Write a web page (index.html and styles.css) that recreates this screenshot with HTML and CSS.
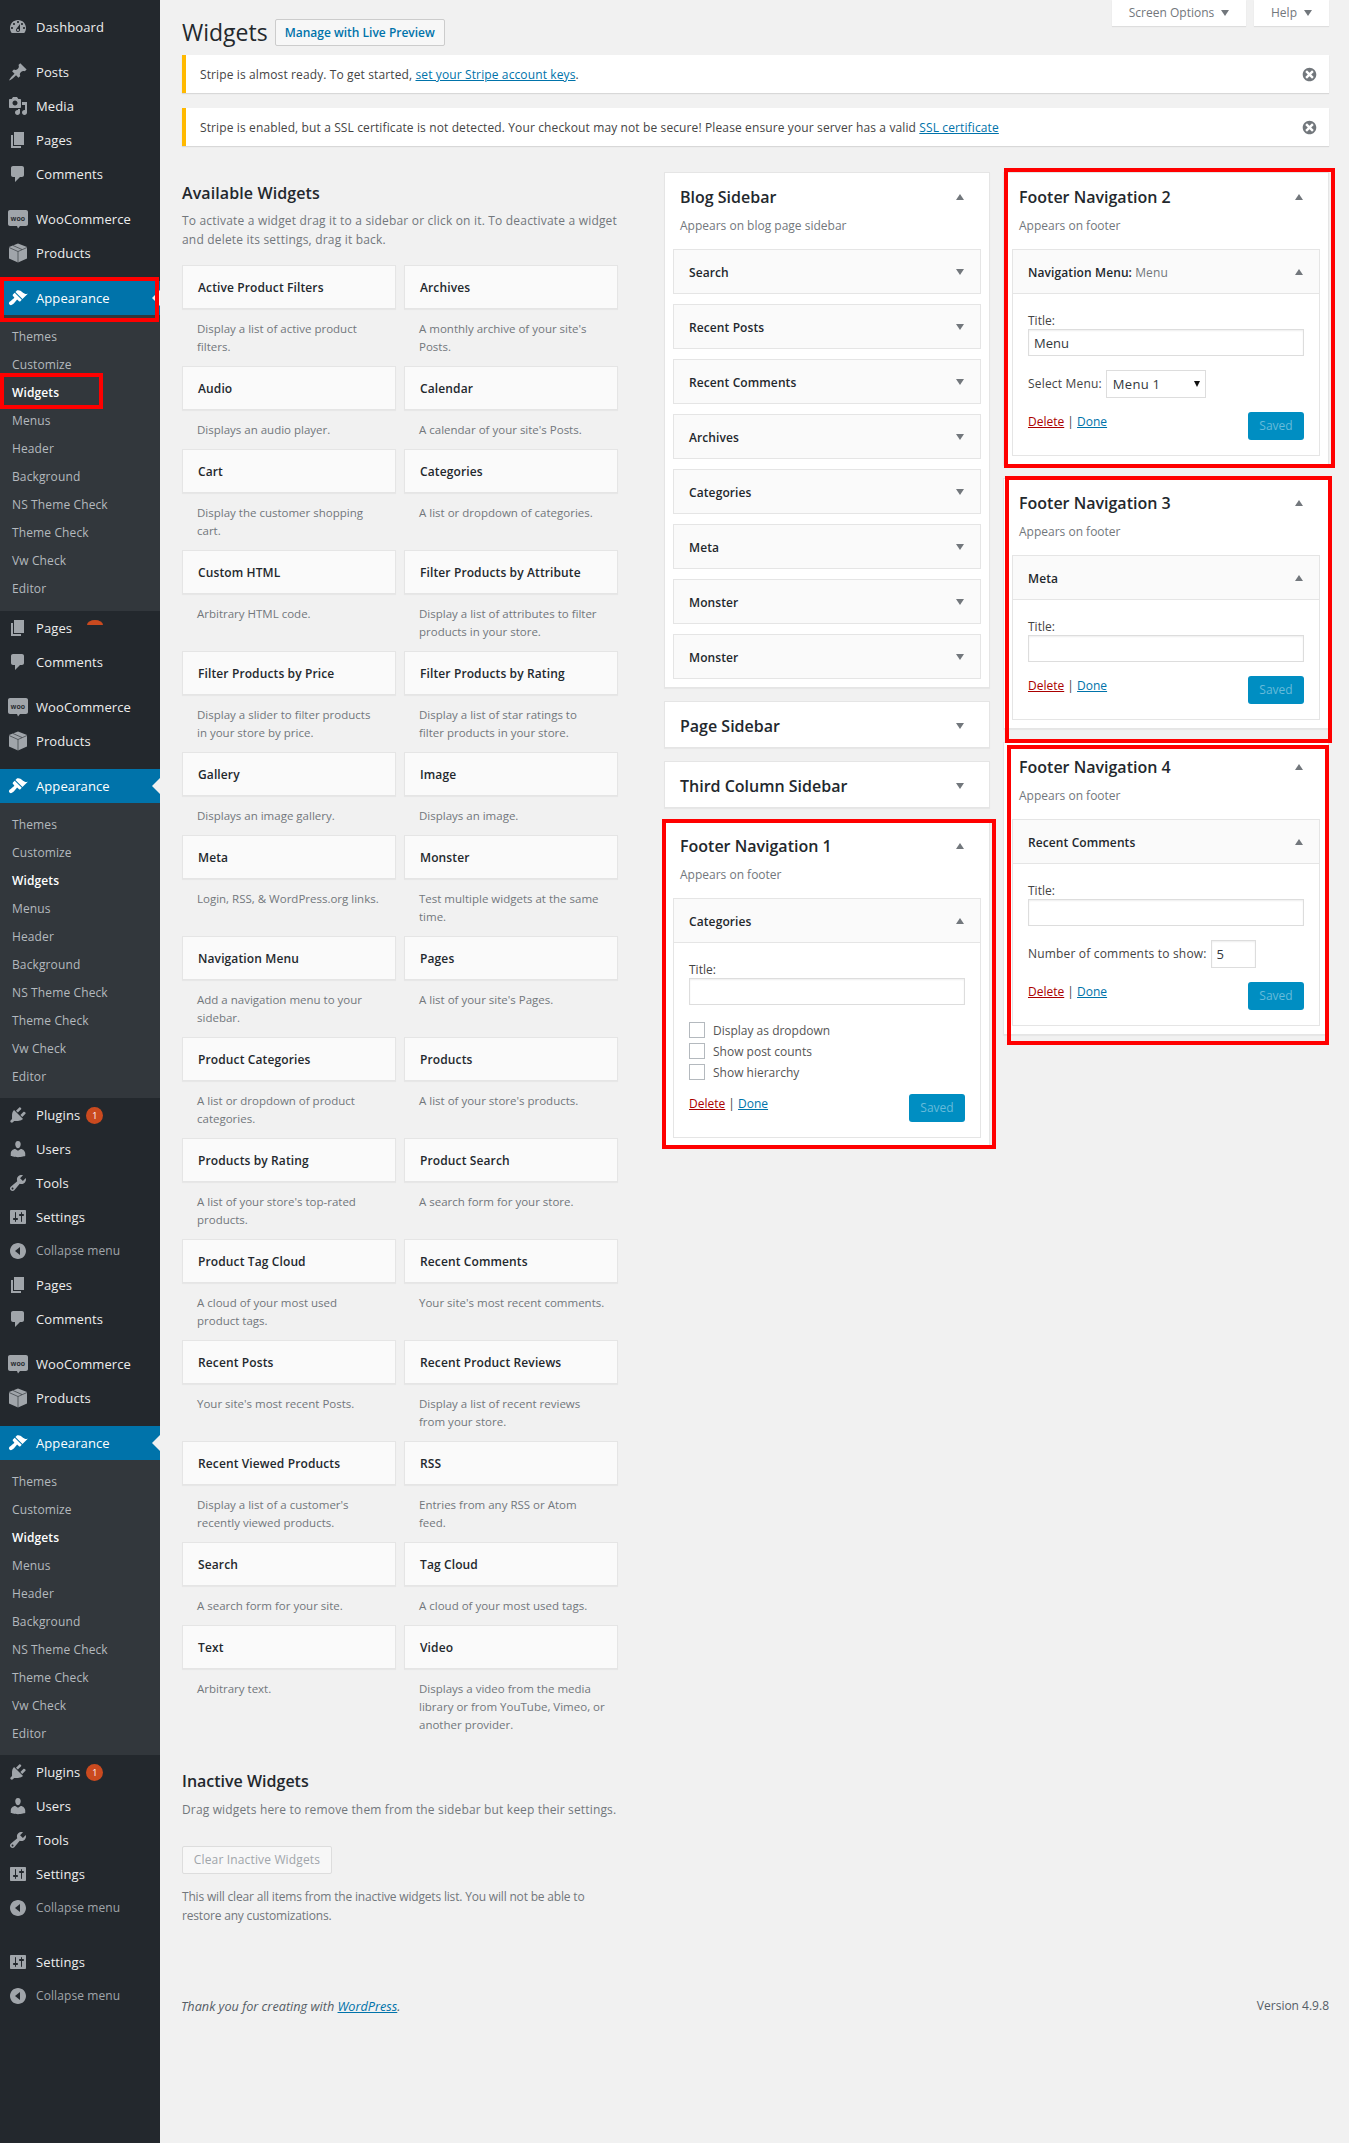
FILE: index.html
```html
<!DOCTYPE html>
<html>
<head>
<meta charset="utf-8" />
<title>Widgets</title>
<link rel="stylesheet" href="styles.css">
</head>
<body>
<svg class="sprite" xmlns="http://www.w3.org/2000/svg">
	<symbol id="i-dashboard" viewBox="0 0 20 20"><path d="M3.76 16h12.48c1.1-1.37 1.76-3.11 1.76-5 0-4.42-3.58-8-8-8s-8 3.58-8 8c0 1.89.66 3.63 1.76 5zM10 4c.55 0 1 .45 1 1s-.45 1-1 1-1-.45-1-1 .45-1 1-1zM6 6c.55 0 1 .45 1 1s-.45 1-1 1-1-.45-1-1 .45-1 1-1zm8 0c.55 0 1 .45 1 1s-.45 1-1 1-1-.45-1-1 .45-1 1-1zm-5.37 5.55L12 7v6c0 1.1-.9 2-2 2s-2-.9-2-2c0-.57.24-1.08.63-1.45zM4 10c.55 0 1 .45 1 1s-.45 1-1 1-1-.45-1-1 .45-1 1-1zm12 0c.55 0 1 .45 1 1s-.45 1-1 1-1-.45-1-1 .45-1 1-1zm-5 3c0-.55-.45-1-1-1s-1 .45-1 1 .45 1 1 1 1-.45 1-1z"/></symbol>
	<symbol id="i-post" viewBox="0 0 20 20"><path d="M10.44 3.02l1.82-1.82 6.36 6.35-1.83 1.82c-1.05-.68-2.48-.57-3.41.36l-.75.75c-.92.93-1.04 2.35-.35 3.41l-1.83 1.82-2.41-2.41-2.8 2.79c-.42.42-3.38 2.71-3.8 2.29s1.86-3.39 2.28-3.81l2.79-2.79L4.1 9.36l1.83-1.82c1.05.69 2.48.57 3.4-.36l.75-.75c.93-.92 1.05-2.35.36-3.41z"/></symbol>
	<symbol id="i-media" viewBox="0 0 20 20"><path d="M13 11V4c0-.55-.45-1-1-1h-1.67L9 1H5L3.67 3H2c-.55 0-1 .45-1 1v7c0 .55.45 1 1 1h10c.55 0 1-.45 1-1zM7 4.5c1.38 0 2.5 1.12 2.5 2.5S8.38 9.5 7 9.5 4.5 8.38 4.5 7 5.62 4.5 7 4.5zM14 6h5v10.5c0 1.38-1.12 2.5-2.5 2.5S14 17.88 14 16.5s1.12-2.5 2.5-2.5c.17 0 .34.02.5.05V9h-3V6zm-4 8.05V13h2v3.5c0 1.38-1.12 2.5-2.5 2.5S7 17.88 7 16.5 8.12 14 9.5 14c.17 0 .34.02.5.05z"/></symbol>
	<symbol id="i-page" viewBox="0 0 20 20"><path d="M6 15V2h10v13H6zm-1 1h8v2H3V5h2v11z"/></symbol>
	<symbol id="i-comment" viewBox="0 0 20 20"><path d="M5 2h9c1.1 0 2 .9 2 2v7c0 1.1-.9 2-2 2h-2l-5 5v-5H5c-1.1 0-2-.9-2-2V4c0-1.1.9-2 2-2z"/></symbol>
	<symbol id="i-woo" viewBox="0 0 20 20"><path d="M2 1h16c1.1 0 2 .9 2 2v12c0 1.1-.9 2-2 2h-6l-2 2.500-1-2.500H2c-1.100 0-2-.9-2-2V3c0-1.100.9-2 2-2z"/><text x="10" y="11.500" text-anchor="middle" class="woo-text">woo</text></symbol>
	<symbol id="i-box" viewBox="0 0 20 20"><path d="M10 0.500l9 3.500v11.500l-9 4-9-4V4z"/><path class="box-line" d="M1 4.500l9 4 9-4M10 8.500v11M5 2.500l9 4"/></symbol>
	<symbol id="i-brush" viewBox="0 0 20 20"><path d="M14.480 11.060L7.410 3.990l1.500-1.500c.5-.56 2.300-.47 3.510.32 1.210.8 1.430 1.280 2.910 2.100 1.180.64 2.450 1.260 4.450.85zm-.71.71L6.700 4.700 4.930 6.470c-.39.39-.39 1.020 0 1.410l1.060 1.060c.39.39.39 1.030 0 1.420-.6.6-1.430 1.110-2.210 1.690-.35.26-.7.53-1.010.84C1.430 13.230.57 15.110 1.100 16.100l.93.91c.99.53 2.670-.32 3.970-1.660.31-.31.58-.66.84-1.010.58-.78 1.090-1.610 1.690-2.210.39-.39 1.020-.39 1.410 0l1.060 1.060c.39.39 1.020.39 1.410 0z"/></symbol>
	<symbol id="i-plugin" viewBox="0 0 20 20"><path d="M13.110 4.360L9.870 7.600 8 5.730l3.240-3.240c.35-.34 1.050-.2 1.560.32.52.51.66 1.210.31 1.550zm-8 1.770l.91-1.120 9.010 9.010-1.190.84c-.71.71-2.630 1.160-3.820 1.160H6.140L4.900 17.260c-.59.59-1.540.59-2.120 0-.59-.58-.59-1.530 0-2.120l1.240-1.240v-3.880c0-1.130.4-3.190 1.090-3.890zm7.260 3.970l3.240-3.240c.34-.35 1.040-.21 1.550.31.52.51.66 1.210.31 1.550l-3.240 3.250z"/></symbol>
	<symbol id="i-users" viewBox="0 0 20 20"><path d="M10 9.250c-2.270 0-2.730-3.440-2.730-3.440C7 4.020 7.820 2 9.970 2c2.160 0 2.980 2.020 2.710 3.810 0 0-.41 3.440-2.680 3.440zm0 2.570L12.720 10c2.390 0 4.520 2.330 4.520 4.530v2.490s-3.650 1.130-7.240 1.130c-3.650 0-7.240-1.130-7.240-1.130v-2.490c0-2.250 1.940-4.480 4.470-4.480z"/></symbol>
	<symbol id="i-tools" viewBox="0 0 20 20"><path d="M16.680 9.770c-1.340 1.340-3.300 1.670-4.950.99l-5.410 6.520c-.99.99-2.590.99-3.580 0s-.99-2.590 0-3.570l6.520-5.420c-.68-1.650-.35-3.610.99-4.950 1.280-1.280 3.120-1.620 4.720-1.060l-2.890 2.890 2.820 2.820 2.860-2.870c.53 1.580.18 3.390-1.080 4.650zM3.810 16.210c.4.39 1.040.39 1.430 0 .4-.4.4-1.040 0-1.430-.39-.4-1.030-.4-1.430 0-.39.39-.39 1.030 0 1.430z"/></symbol>
	<symbol id="i-settings" viewBox="0 0 20 20"><path d="M18 16V4c0-.55-.45-1-1-1H3c-.55 0-1 .45-1 1v12c0 .55.45 1 1 1h14c.55 0 1-.45 1-1zM8 11h1c.55 0 1 .45 1 1s-.45 1-1 1H8v1.500c0 .28-.22.5-.5.5s-.5-.22-.5-.5V13H6c-.55 0-1-.45-1-1s.45-1 1-1h1V5.500c0-.28.22-.5.5-.5s.5.22.5.5V11zm5-2h-1c-.55 0-1-.45-1-1s.45-1 1-1h1V5.500c0-.28.22-.5.5-.5s.5.22.5.5V7h1c.55 0 1 .45 1 1s-.45 1-1 1h-1v5.500c0 .28-.22.5-.5.5s-.5-.22-.5-.5V9z"/></symbol>
	<symbol id="i-collapse" viewBox="0 0 20 20"><path d="M10 2c4.420 0 8 3.580 8 8s-3.580 8-8 8-8-3.580-8-8 3.580-8 8-8zm2 12V6l-5 4z"/></symbol>
	<symbol id="i-dismiss" viewBox="0 0 20 20"><path d="M10 2c4.420 0 8 3.580 8 8s-3.580 8-8 8-8-3.580-8-8 3.580-8 8-8zm5 11l-3-3 3-3-2-2-3 3-3-3-2 2 3 3-3 3 2 2 3-3 3 3z"/></symbol>
</svg>

<div id="shell">
<ul id="adminmenu">
	<li class="item first"><svg class="ico"><use href="#i-dashboard"/></svg>Dashboard</li>
	<li class="sep"></li>
	<li class="item"><svg class="ico"><use href="#i-post"/></svg>Posts</li>
	<li class="item"><svg class="ico"><use href="#i-media"/></svg>Media</li>
	<li class="item"><svg class="ico"><use href="#i-page"/></svg>Pages</li>
	<li class="item"><svg class="ico"><use href="#i-comment"/></svg>Comments</li>
	<li class="sep"></li>
	<li class="item"><svg class="ico"><use href="#i-woo"/></svg>WooCommerce</li>
	<li class="item"><svg class="ico"><use href="#i-box"/></svg>Products</li>
	<li class="sep"></li>
	<li class="item current"><svg class="ico"><use href="#i-brush"/></svg>Appearance</li>
	<li>
		<ul class="submenu firstsub">
			<li>Themes</li><li>Customize</li><li class="on">Widgets</li><li>Menus</li><li>Header</li><li>Background</li><li>NS Theme Check</li><li>Theme Check</li><li>Vw Check</li><li>Editor</li>
		</ul>
	</li>
	<li class="item"><svg class="ico"><use href="#i-page"/></svg>Pages<span class="sliver"></span></li>
	<li class="item"><svg class="ico"><use href="#i-comment"/></svg>Comments</li>
	<li class="sep"></li>
	<li class="item"><svg class="ico"><use href="#i-woo"/></svg>WooCommerce</li>
	<li class="item"><svg class="ico"><use href="#i-box"/></svg>Products</li>
	<li class="sep"></li>
	<li class="item current"><svg class="ico"><use href="#i-brush"/></svg>Appearance</li>
	<li>
		<ul class="submenu">
			<li>Themes</li><li>Customize</li><li class="on">Widgets</li><li>Menus</li><li>Header</li><li>Background</li><li>NS Theme Check</li><li>Theme Check</li><li>Vw Check</li><li>Editor</li>
		</ul>
	</li>
	<li class="item"><svg class="ico"><use href="#i-plugin"/></svg>Plugins<span class="badge">1</span></li>
	<li class="item"><svg class="ico"><use href="#i-users"/></svg>Users</li>
	<li class="item"><svg class="ico"><use href="#i-tools"/></svg>Tools</li>
	<li class="item"><svg class="ico"><use href="#i-settings"/></svg>Settings</li>
	<li class="item collapse"><svg class="ico"><use href="#i-collapse"/></svg>Collapse menu</li>
	<li class="item"><svg class="ico"><use href="#i-page"/></svg>Pages</li>
	<li class="item"><svg class="ico"><use href="#i-comment"/></svg>Comments</li>
	<li class="sep"></li>
	<li class="item"><svg class="ico"><use href="#i-woo"/></svg>WooCommerce</li>
	<li class="item"><svg class="ico"><use href="#i-box"/></svg>Products</li>
	<li class="sep"></li>
	<li class="item current"><svg class="ico"><use href="#i-brush"/></svg>Appearance</li>
	<li>
		<ul class="submenu">
			<li>Themes</li><li>Customize</li><li class="on">Widgets</li><li>Menus</li><li>Header</li><li>Background</li><li>NS Theme Check</li><li>Theme Check</li><li>Vw Check</li><li>Editor</li>
		</ul>
	</li>
	<li class="item"><svg class="ico"><use href="#i-plugin"/></svg>Plugins<span class="badge">1</span></li>
	<li class="item"><svg class="ico"><use href="#i-users"/></svg>Users</li>
	<li class="item"><svg class="ico"><use href="#i-tools"/></svg>Tools</li>
	<li class="item"><svg class="ico"><use href="#i-settings"/></svg>Settings</li>
	<li class="item collapse"><svg class="ico"><use href="#i-collapse"/></svg>Collapse menu</li>
	<li class="sep wide"></li>
	<li class="item"><svg class="ico"><use href="#i-settings"/></svg>Settings</li>
	<li class="item collapse"><svg class="ico"><use href="#i-collapse"/></svg>Collapse menu</li>
</ul>

<div id="content">
	<div class="titlerow">
		<h1>Widgets</h1>
		<a class="btn-live" href="javascript:;">Manage with Live Preview</a>
		<div class="tabs"><span class="tab tab-screen">Screen Options<i class="caret down"></i></span><span class="tab tab-help">Help<i class="caret down"></i></span></div>
	</div>
	<div class="notice">
		<p>Stripe is almost ready. To get started, <a href="javascript:;">set your Stripe account keys</a>.</p>
		<svg class="dismiss"><use href="#i-dismiss"/></svg>
	</div>
	<div class="notice">
		<p>Stripe is enabled, but a SSL certificate is not detected. Your checkout may not be secure! Please ensure your server has a valid <a href="javascript:;">SSL certificate</a></p>
		<svg class="dismiss"><use href="#i-dismiss"/></svg>
	</div>

	<div class="columns">
		<div class="available">
			<h2>Available Widgets</h2>
			<p class="lead">To activate a widget drag it to a sidebar or click on it. To deactivate a widget and delete its settings, drag it back.</p>
			<div class="widgetgrid">
				<div class="wg"><h3>Active Product Filters</h3><p>Display a list of active product filters.</p></div>
				<div class="wg"><h3>Archives</h3><p>A monthly archive of your site's Posts.</p></div>
				<div class="wg"><h3>Audio</h3><p>Displays an audio player.</p></div>
				<div class="wg"><h3>Calendar</h3><p>A calendar of your site's Posts.</p></div>
				<div class="wg"><h3>Cart</h3><p>Display the customer shopping cart.</p></div>
				<div class="wg"><h3>Categories</h3><p>A list or dropdown of categories.</p></div>
				<div class="wg"><h3>Custom HTML</h3><p>Arbitrary HTML code.</p></div>
				<div class="wg"><h3>Filter Products by Attribute</h3><p>Display a list of attributes to filter products in your store.</p></div>
				<div class="wg"><h3>Filter Products by Price</h3><p>Display a slider to filter products<br>in your store by price.</p></div>
				<div class="wg"><h3>Filter Products by Rating</h3><p>Display a list of star ratings to<br>filter products in your store.</p></div>
				<div class="wg"><h3>Gallery</h3><p>Displays an image gallery.</p></div>
				<div class="wg"><h3>Image</h3><p>Displays an image.</p></div>
				<div class="wg"><h3>Meta</h3><p>Login, RSS, &amp; WordPress.org links.</p></div>
				<div class="wg"><h3>Monster</h3><p>Test multiple widgets at the same time.</p></div>
				<div class="wg"><h3>Navigation Menu</h3><p>Add a navigation menu to your sidebar.</p></div>
				<div class="wg"><h3>Pages</h3><p>A list of your site's Pages.</p></div>
				<div class="wg"><h3>Product Categories</h3><p>A list or dropdown of product categories.</p></div>
				<div class="wg"><h3>Products</h3><p>A list of your store's products.</p></div>
				<div class="wg"><h3>Products by Rating</h3><p>A list of your store's top-rated products.</p></div>
				<div class="wg"><h3>Product Search</h3><p>A search form for your store.</p></div>
				<div class="wg"><h3>Product Tag Cloud</h3><p>A cloud of your most used<br>product tags.</p></div>
				<div class="wg"><h3>Recent Comments</h3><p>Your site's most recent comments.</p></div>
				<div class="wg"><h3>Recent Posts</h3><p>Your site's most recent Posts.</p></div>
				<div class="wg"><h3>Recent Product Reviews</h3><p>Display a list of recent reviews from your store.</p></div>
				<div class="wg"><h3>Recent Viewed Products</h3><p>Display a list of a customer's recently viewed products.</p></div>
				<div class="wg"><h3>RSS</h3><p>Entries from any RSS or Atom feed.</p></div>
				<div class="wg"><h3>Search</h3><p>A search form for your site.</p></div>
				<div class="wg"><h3>Tag Cloud</h3><p>A cloud of your most used tags.</p></div>
				<div class="wg"><h3>Text</h3><p>Arbitrary text.</p></div>
				<div class="wg"><h3>Video</h3><p>Displays a video from the media library or from YouTube, Vimeo, or another provider.</p></div>
			</div>
			<h2 class="inactive">Inactive Widgets</h2>
			<p class="lead droplead">Drag widgets here to remove them from the sidebar but keep their settings.</p>
			<span class="btn-clear">Clear Inactive Widgets</span>
			<p class="lead clearnote">This will clear all items from the inactive widgets list. You will not be able to restore any customizations.</p>
		</div>

		<div class="sidebars">
			<div class="panel">
				<div class="panelhead"><h2>Blog Sidebar</h2><i class="caret up"></i></div>
				<p class="paneldesc">Appears on blog page sidebar</p>
				<div class="inner"><div class="innerhead"><h3>Search</h3><i class="caret down"></i></div></div>
				<div class="inner"><div class="innerhead"><h3>Recent Posts</h3><i class="caret down"></i></div></div>
				<div class="inner"><div class="innerhead"><h3>Recent Comments</h3><i class="caret down"></i></div></div>
				<div class="inner"><div class="innerhead"><h3>Archives</h3><i class="caret down"></i></div></div>
				<div class="inner"><div class="innerhead"><h3>Categories</h3><i class="caret down"></i></div></div>
				<div class="inner"><div class="innerhead"><h3>Meta</h3><i class="caret down"></i></div></div>
				<div class="inner"><div class="innerhead"><h3>Monster</h3><i class="caret down"></i></div></div>
				<div class="inner"><div class="innerhead"><h3>Monster</h3><i class="caret down"></i></div></div>
			</div>
			<div class="panel closed"><div class="panelhead"><h2>Page Sidebar</h2><i class="caret down"></i></div></div>
			<div class="panel closed"><div class="panelhead"><h2>Third Column Sidebar</h2><i class="caret down"></i></div></div>
			<div class="panel">
				<div class="panelhead"><h2>Footer Navigation 1</h2><i class="caret up"></i></div>
				<p class="paneldesc">Appears on footer</p>
				<div class="inner">
					<div class="innerhead"><h3>Categories</h3><i class="caret up"></i></div>
					<div class="innerbody">
						<label class="field">Title:<input type="text"></label>
						<div class="checks">
							<label><input type="checkbox">Display as dropdown</label>
							<label><input type="checkbox">Show post counts</label>
							<label><input type="checkbox">Show hierarchy</label>
						</div>
						<div class="actions"><span class="links"><a class="del" href="javascript:;">Delete</a> | <a href="javascript:;">Done</a></span><span class="btn-saved">Saved</span></div>
					</div>
				</div>
			</div>
		</div>

		<div class="sidebars">
			<div class="panel">
				<div class="panelhead"><h2>Footer Navigation 2</h2><i class="caret up"></i></div>
				<p class="paneldesc">Appears on footer</p>
				<div class="inner">
					<div class="innerhead"><h3>Navigation Menu:<span class="in"> Menu</span></h3><i class="caret up"></i></div>
					<div class="innerbody">
						<label class="field">Title:<input type="text" value="Menu"></label>
						<label class="inline">Select Menu: <span class="selwrap"><select class="menusel"><option>Menu 1</option></select></span></label>
						<div class="actions"><span class="links"><a class="del" href="javascript:;">Delete</a> | <a href="javascript:;">Done</a></span><span class="btn-saved">Saved</span></div>
					</div>
				</div>
			</div>
			<div class="panel">
				<div class="panelhead"><h2>Footer Navigation 3</h2><i class="caret up"></i></div>
				<p class="paneldesc">Appears on footer</p>
				<div class="inner">
					<div class="innerhead"><h3>Meta</h3><i class="caret up"></i></div>
					<div class="innerbody">
						<label class="field">Title:<input type="text"></label>
						<div class="actions"><span class="links"><a class="del" href="javascript:;">Delete</a> | <a href="javascript:;">Done</a></span><span class="btn-saved">Saved</span></div>
					</div>
				</div>
			</div>
			<div class="panel">
				<div class="panelhead"><h2>Footer Navigation 4</h2><i class="caret up"></i></div>
				<p class="paneldesc">Appears on footer</p>
				<div class="inner">
					<div class="innerhead"><h3>Recent Comments</h3><i class="caret up"></i></div>
					<div class="innerbody">
						<label class="field">Title:<input type="text"></label>
						<label class="inline">Number of comments to show: <input class="num" type="text" value="5"></label>
						<div class="actions"><span class="links"><a class="del" href="javascript:;">Delete</a> | <a href="javascript:;">Done</a></span><span class="btn-saved">Saved</span></div>
					</div>
				</div>
			</div>
		</div>
	</div>

	<div class="foot">
		<em>Thank you for creating with <a href="javascript:;">WordPress</a>.</em>
		<span>Version 4.9.8</span>
	</div>
</div>
</div>

<div class="mark mark-appearance"></div>
<div class="mark mark-widgets"></div>
<div class="mark mark-f1"></div>
<div class="mark mark-f2"></div>
<div class="mark mark-f3"></div>
<div class="mark mark-f4"></div>
</body>
</html>
```

FILE: styles.css
```css
*{margin:0;padding:0;box-sizing:border-box;}
html,body{background:#f1f1f1;}
body{position:relative;font-family:"Open Sans","Liberation Sans",sans-serif;font-size:12px;line-height:18px;color:#444;}
ul{list-style:none;}
a{color:#0073aa;}
.sprite{display:none;}

#shell{display:flex;min-height:100vh;}

/* admin menu */
#adminmenu{width:160px;flex:none;background:#23282d;color:#eee;font-size:13px;letter-spacing:.1px;padding-top:10px;}
.item{position:relative;display:flex;align-items:center;height:34px;}
.ico{width:20px;height:20px;margin:0 8px;fill:#a0a5aa;flex:none;}
.woo-text{font:bold 7px "Liberation Sans",sans-serif;fill:#23282d;}
.box-line{fill:none;stroke:#23282d;stroke-width:.6;}
.sep{height:11px;}
.sep.wide{height:20px;}
.current{background:#0073aa;color:#fff;}
.current .ico{fill:#fff;}
.current:after{content:'';position:absolute;right:0;top:9px;border:8px solid transparent;border-left:0;border-right-color:#f1f1f1;}
.collapse{color:#a0a5aa;font-size:12px;}
.submenu{background:#32373c;padding:8px 0 7px;color:#b4b9be;font-size:12px;letter-spacing:.12px;}
.submenu.firstsub{padding-bottom:8px;}
.submenu li{height:28px;line-height:28px;padding-left:12px;}
.submenu .on{color:#fff;font-weight:600;}
.badge{width:17px;height:17px;border-radius:50%;background:#ca4a1f;color:#fff;font-size:9px;line-height:17px;text-align:center;margin-left:6px;}
.sliver{position:absolute;left:87px;top:9px;width:16px;height:5px;background:#ca4a1f;border-radius:50% 50% 0 0 / 100% 100% 0 0;}

/* main */
#content{flex:1;padding:0 20px 0 22px;min-width:0;}
.titlerow{display:flex;height:46px;}
h1{align-self:flex-end;font-size:23px;font-weight:400;line-height:27px;color:#23282d;margin-right:7px;}
.btn-live{align-self:flex-end;height:27px;line-height:25px;padding:0 9px;border:1px solid #ccc;border-radius:2px;background:#f7f7f7;color:#0073aa;font-weight:600;text-decoration:none;}
.tabs{margin-left:auto;display:flex;gap:8px;}
.tab{display:flex;align-items:center;justify-content:center;height:26px;background:#fff;color:#72777c;box-shadow:0 1px 1px rgba(0,0,0,.08);}
.tab-screen{width:134px;}
.tab-help{width:75px;}
.tab .caret{margin-left:7px;}

.caret{display:block;width:0;height:0;border-left:4.500px solid transparent;border-right:4.500px solid transparent;flex:none;}
.caret.up{border-bottom:6px solid #72777c;}
.caret.down{border-top:6px solid #72777c;}

.notice{display:flex;align-items:center;justify-content:space-between;height:38px;margin-top:9px;padding:0 11px 0 14px;background:#fff;border-left:4px solid #ffb900;box-shadow:0 1px 1px rgba(0,0,0,.1);}
.notice + .notice{margin-top:15px;}
.notice p{letter-spacing:.12px;padding-top:2px;}
.dismiss{width:17px;height:17px;fill:#72777c;}

.columns{display:flex;margin-top:26px;}
.available{width:436px;margin-right:46px;flex:none;}
.available h2{font-size:16px;font-weight:600;letter-spacing:.1px;line-height:24px;margin-top:9px;color:#23282d;}
.lead{color:#72777c;line-height:19px;margin-top:6px;letter-spacing:.19px;}
.widgetgrid{display:grid;grid-template-columns:214px 214px;column-gap:8px;margin-top:16px;}
.wg h3{height:44px;line-height:44px;padding-left:15px;font-size:12px;font-weight:600;letter-spacing:.12px;color:#23282d;background:#fafafa;border:1px solid #e5e5e5;box-shadow:0 1px 1px rgba(0,0,0,.04);}
.wg p{padding:11px 12px 10px 15px;color:#72777c;font-size:11.500px;}
.available h2.inactive{margin-top:25px;letter-spacing:0;}
.droplead{margin-top:7px;letter-spacing:.15px;}
.btn-clear{display:block;width:150px;height:28px;line-height:26px;text-align:center;margin-top:27px;border:1px solid #ddd;border-radius:2px;color:#a0a5aa;background:#f7f7f7;letter-spacing:.15px;}
.clearnote{margin-top:13px;letter-spacing:-.18px;}

.sidebars{width:326px;flex:none;margin-right:13px;}
.sidebars:last-of-type{margin-right:0;}
.panel{background:#fff;border:1px solid #e5e5e5;box-shadow:0 1px 1px rgba(0,0,0,.04);margin-bottom:13px;padding:0 8px 8px;}
.panel.closed{height:47px;padding-bottom:0;}
.panelhead{display:flex;justify-content:space-between;align-items:center;height:48px;padding:0 17px 0 7px;}
.panelhead h2{font-size:16px;font-weight:600;color:#23282d;}
.paneldesc{padding-left:7px;color:#72777c;margin-top:-4px;height:32px;line-height:18px;}
.inner{background:#fff;border:1px solid #e5e5e5;margin-bottom:10px;}
.inner:last-child{margin-bottom:0;}
.innerhead{display:flex;justify-content:space-between;align-items:center;height:43px;padding:0 16px 0 15px;background:#fafafa;}
.inner .innerbody{border-top:1px solid #e5e5e5;}
.innerhead h3{font-size:12px;font-weight:600;letter-spacing:.1px;color:#23282d;padding-top:2px;}
.innerhead .in{font-weight:400;color:#72777c;}
.innerbody{display:flex;flex-direction:column;gap:14px;padding:18px 15px 15px;}
.field{display:block;line-height:17px;}
input[type=text]{display:block;width:100%;height:27px;padding:0 5px;border:1px solid #ddd;box-shadow:inset 0 1px 2px rgba(0,0,0,.07);font:13px "Open Sans",sans-serif;color:#32373c;background:#fff;}
.inline{display:flex;align-items:center;gap:4px;white-space:nowrap;letter-spacing:.18px;}
.inline input[type=text].num{width:45px;height:28px;}
.selwrap{position:relative;display:block;}
.selwrap:after{content:'';position:absolute;right:6px;top:11px;border-left:3.500px solid transparent;border-right:3.500px solid transparent;border-top:6px solid #111;}
.menusel{display:block;appearance:none;width:100px;height:28px;padding-left:6px;border:1px solid #ddd;background:#fff;font:13px "Open Sans",sans-serif;letter-spacing:.3px;color:#32373c;}
.checks{display:flex;flex-direction:column;gap:5px;margin-top:3px;}
.checks label{display:flex;align-items:center;height:16px;color:#555;padding-top:1px;}
.checks input{appearance:none;width:16px;height:16px;margin:-1px 8px 0 0;border:1px solid #b4b9be;background:#fff;}
.actions{display:flex;justify-content:space-between;align-items:flex-start;}
.links{margin-top:1px;}
.del{color:#a00;}
.btn-saved{width:56px;height:28px;line-height:28px;text-align:center;background:#008ec2;color:#66bbda;border-radius:3px;}

.foot{display:flex;justify-content:space-between;margin-top:72px;color:#555d66;}
.foot em{font-size:12.700px;margin-left:-1px;}

/* red annotation boxes drawn on top of the shot */
.mark{position:absolute;border:4px solid #f00;pointer-events:none;}
.mark-appearance{left:0;top:277px;width:159px;height:45px;}
.mark-widgets{left:0;top:373px;width:103px;height:36px;}
.mark-f1{left:662px;top:819px;width:334px;height:330px;}
.mark-f2{left:1004px;top:168px;width:331px;height:300px;}
.mark-f3{left:1005px;top:476px;width:327px;height:267px;}
.mark-f4{left:1007px;top:745px;width:322px;height:300px;}
```
